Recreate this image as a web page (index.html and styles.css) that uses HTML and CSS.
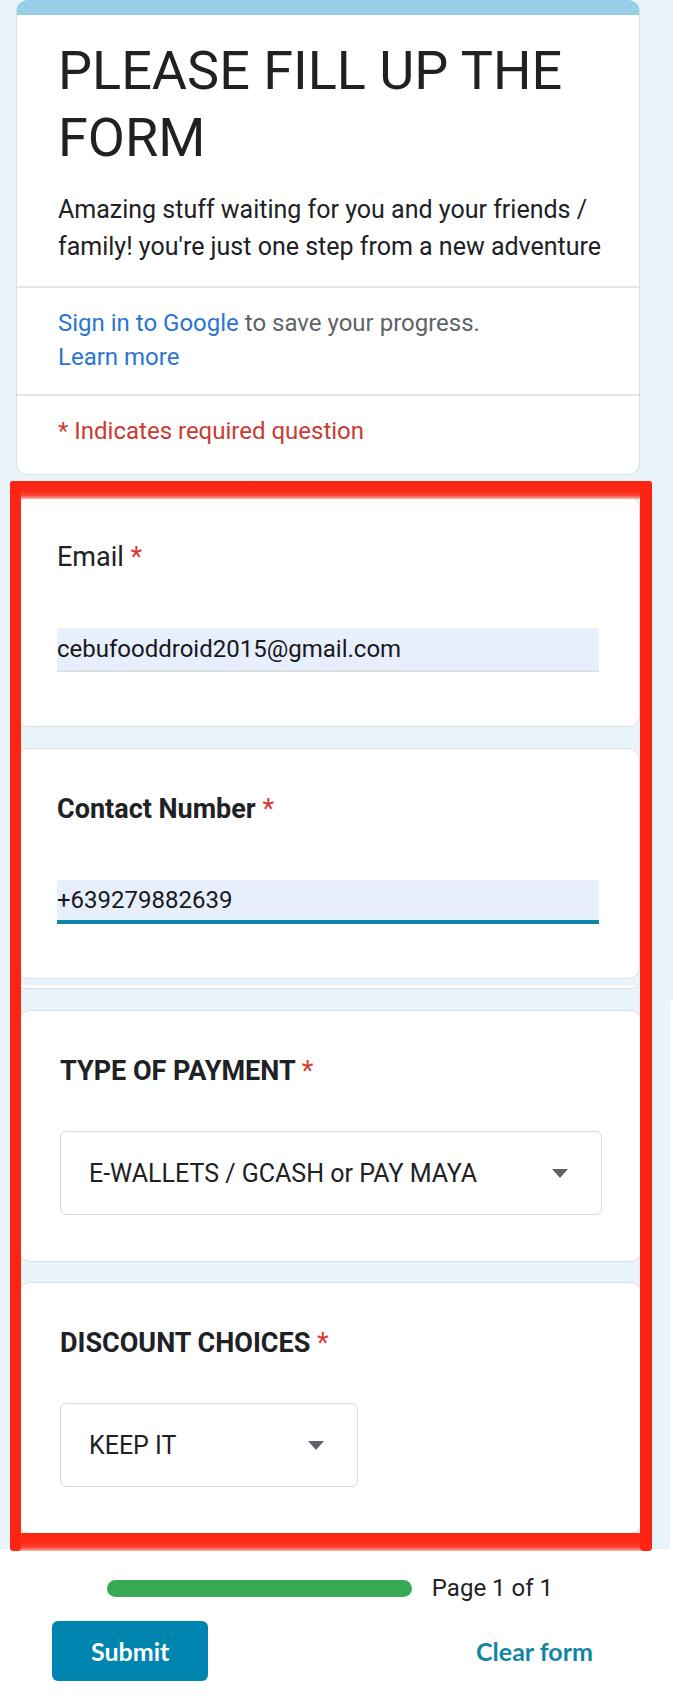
FILE: index.html
```html
<!DOCTYPE html>
<html lang="en">
<head>
<meta charset="utf-8">
<meta name="viewport" content="width=device-width, initial-scale=1">
<title>Please fill up the form</title>
<link rel="stylesheet" href="styles.css">
</head>
<body>
<form class="form">
  <div class="sheet sheet-intro">
    <header class="card intro">
      <div class="intro-main">
        <h1 class="title">PLEASE FILL UP THE FORM</h1>
        <p class="description">Amazing stuff waiting for you and your friends / family! you're just one step from a new adventure</p>
      </div>
      <p class="intro-row account"><a class="link" href="#">Sign in to Google</a> to save your progress.<br><a class="link" href="#">Learn more</a></p>
      <p class="intro-row required-note">* Indicates required question</p>
    </header>
  </div>

  <div class="questions">
    <div class="sheet sheet-text">
      <section class="card question">
        <label class="label label-light" for="email">Email <span class="star">*</span></label>
        <input class="field" id="email" type="email" value="cebufooddroid2015@gmail.com">
      </section>
      <section class="card question">
        <label class="label" for="contact">Contact Number <span class="star">*</span></label>
        <input class="field field-active" id="contact" type="tel" value="+639279882639">
      </section>
      <div class="card-edge"></div>
    </div>
    <div class="sheet sheet-choice">
      <section class="card question choice">
        <label class="label" for="payment">TYPE OF PAYMENT <span class="star">*</span></label>
        <div class="picker">
          <select class="select" id="payment"><option>E-WALLETS / GCASH or PAY MAYA</option></select>
          <svg class="arrow" viewBox="0 0 16 9" aria-hidden="true"><path d="M0 0h16L8 9z"/></svg>
        </div>
      </section>
      <section class="card question choice">
        <label class="label" for="discount">DISCOUNT CHOICES <span class="star">*</span></label>
        <div class="picker picker-short">
          <select class="select" id="discount"><option>KEEP IT</option></select>
          <svg class="arrow" viewBox="0 0 16 9" aria-hidden="true"><path d="M0 0h16L8 9z"/></svg>
        </div>
      </section>
    </div>
    <svg class="marker" aria-hidden="true">
      <defs>
        <linearGradient id="fade" x1="0" y1="0" x2="0" y2="1">
          <stop offset="0" stop-color="#fd2413"/>
          <stop offset=".55" stop-color="#fb2a19"/>
          <stop offset=".8" stop-color="#fa4436"/>
          <stop offset="1" stop-color="#fcb5ae"/>
        </linearGradient>
      </defs>
      <rect width="100%" height="18" rx="3" fill="url(#fade)"/>
      <svg y="100%" overflow="visible"><rect y="-18" width="100%" height="18" rx="3" fill="url(#fade)"/></svg>
      <rect width="11" height="100%" rx="4" fill="#fd2413"/>
      <svg x="100%" overflow="visible"><rect x="-12" width="12" height="100%" rx="4" fill="#fd2413"/></svg>
    </svg>
  </div>

  <footer class="footer">
    <div class="progress-row">
      <progress class="progress" id="progress" value="1" max="1"></progress>
      <label for="progress">Page 1 of 1</label>
    </div>
    <div class="actions">
      <button class="button submit" type="submit">Submit</button>
      <button class="button clear" type="reset">Clear form</button>
    </div>
  </footer>
</form>
</body>
</html>
```
FILE: styles.css
```css
* { box-sizing: border-box; }

body {
  margin: 0;
  background: #fff;
  color: #202124;
  font-family: Roboto, "Liberation Sans", sans-serif;
  font-size: 24px;
}

h1, p { margin: 0; }

.sheet {
  margin-right: 6px;
  padding: 0 33px 0 16px;
  background: #e8f4f9;
}

.card {
  background: #fff;
  border: 1px solid #dadfe3;
  border-radius: 12px;
}

/* Introduction */
.sheet-intro { padding-bottom: 6px; }

.intro {
  border-top: 15px solid #98cee8;
}

.intro-main { padding: 22px 30px 21px 41px; }

.title {
  font-size: 54px;
  font-weight: 400;
  line-height: 67px;
}

.description {
  margin-top: 20px;
  font-size: 25px;
  line-height: 37px;
}

.intro-row {
  padding: 18px 41px 20px;
  border-top: 2px solid #e3e5e7;
  line-height: 34px;
}

.account { color: #5f6368; }
.link { color: #2a75d3; text-decoration: none; }
.required-note { padding-bottom: 26px; color: #c93b32; }

/* Questions */
.questions { position: relative; }

.sheet-text {
  display: flex;
  flex-direction: column;
  gap: 21px;
  padding-top: 15px;
  padding-bottom: 11px;
}

.question {
  display: flex;
  flex-direction: column;
  padding: 44px 40px 54px;
}

.label {
  margin-bottom: 55px;
  font-size: 27px;
  font-weight: 700;
  line-height: 32px;
}

.label-light { font-weight: 400; }
.star { color: #d8392f; font-weight: 400; }

.field {
  width: 100%;
  height: 44px;
  padding: 0 0 1px;
  border: 0;
  border-bottom: 2px solid #dcdfe3;
  border-radius: 0;
  outline: 0;
  background: #e8effc;
  color: #17181b;
  font: inherit;
}

.field-active { border-bottom: 4px solid #0d84a8; }

.card-edge {
  height: 10px;
  margin-top: -21px;
  border-bottom: 1px solid #dadfe3;
  border-radius: 0 0 12px 12px;
  background: linear-gradient(transparent 6px, #fff 6px);
}

.sheet-choice {
  display: flex;
  flex-direction: column;
  gap: 20px;
  margin-right: 9px;
  padding: 10px 28px 15px 18px;
}

.choice {
  padding: 44px 39px 46px 41px;
}

.choice .label { margin-bottom: 44px; }

.picker { position: relative; }
.picker-short { width: 55%; }

.select {
  width: 100%;
  height: 84px;
  padding: 0 64px 0 28px;
  appearance: none;
  border: 1px solid #d8dadd;
  border-radius: 6px;
  background: #fff;
  color: #202124;
  font: inherit;
  font-size: 25px;
}

.arrow {
  position: absolute;
  top: 38px;
  right: 34px;
  width: 16px;
  height: 9px;
  fill: #5f6368;
  pointer-events: none;
}

/* Red hand-drawn frame over the question area */
.marker {
  position: absolute;
  top: 0;
  left: 10px;
  width: calc(100% - 37px);
  height: calc(100% + 2px);
  overflow: visible;
  pointer-events: none;
}

/* Footer */
.footer { padding: 21px 74px 21px 52px; }

.progress-row {
  display: flex;
  align-items: center;
  gap: 20px;
  padding: 0 52px 0 55px;
  line-height: 36px;
}

.progress-row label { flex: none; }

.progress {
  flex: 1;
  min-width: 0;
  height: 17px;
  appearance: none;
  border: 0;
  border-radius: 9px;
  overflow: hidden;
}

.progress::-webkit-progress-bar { background: #dadce0; }
.progress::-webkit-progress-value { background: #37a853; }

.actions {
  display: flex;
  align-items: center;
  justify-content: space-between;
  margin-top: 15px;
}

.button {
  height: 60px;
  border: 0;
  border-radius: 6px;
  font-family: Lato, "Liberation Sans", sans-serif;
  font-size: 25px;
  font-weight: 700;
}

.submit {
  padding: 0 39px;
  background: #0085b0;
  color: #fff;
}

.clear {
  padding: 0 12px;
  background: none;
  color: #1285a6;
}
```
